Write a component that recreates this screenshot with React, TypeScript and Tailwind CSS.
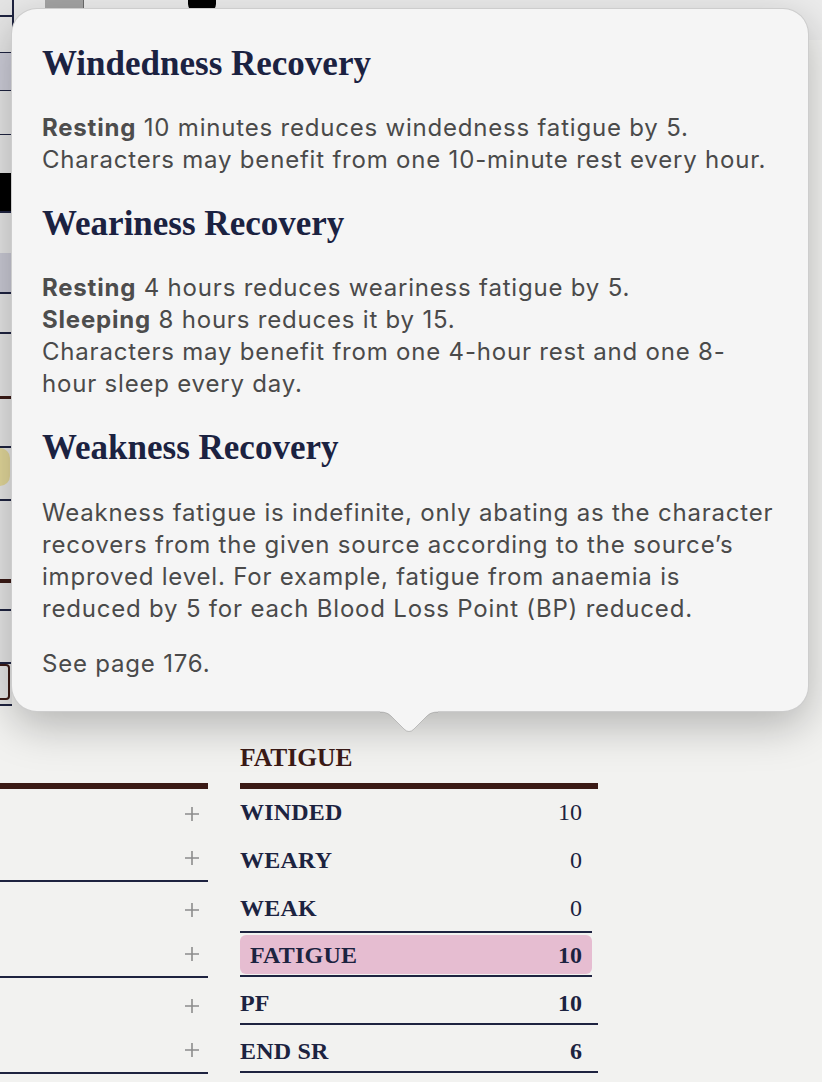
import React from "react";

const Plus = () => (
  <svg width="16" height="16" viewBox="0 0 16 16" className="block">
    <path d="M8 1v14M1 8h14" stroke="#8c8c8c" strokeWidth="1.6" />
  </svg>
);

function LeftStrip() {
  return (
    <div className="w-[12px] self-start flex flex-col bg-[#e5e5e5]">
      <div className="h-[15px]" />
      <div className="h-[2px] bg-[#1e2340]" />
      <div className="h-[35px]" />
      <div className="h-[1px] bg-[#1e2340]" />
      <div className="h-[37px] bg-[#cdcdd8]" />
      <div className="h-[1px] bg-[#1e2340]" />
      <div className="h-[43px]" />
      <div className="h-[1px] bg-[#1e2340]" />
      <div className="h-[38px]" />
      <div className="h-[38px] bg-black" />
      <div className="h-[2px] bg-[#1e2340]" />
      <div className="h-[40px]" />
      <div className="h-[39px] bg-[#c9c9d4]" />
      <div className="h-[2px] bg-[#1e2340]" />
      <div className="h-[38px]" />
      <div className="h-[2px] bg-[#1e2340]" />
      <div className="h-[62px]" />
      <div className="h-[3px] bg-[#3a1a15]" />
      <div className="h-[47px]" />
      <div className="h-[2px] bg-[#1e2340]" />
      <div className="h-[38px] w-[10px] rounded-r-full bg-[#e2d79a]" />
      <div className="h-[13px]" />
      <div className="h-[2px] bg-[#1e2340]" />
      <div className="h-[78px]" />
      <div className="h-[4px] bg-[#3a1a15]" />
      <div className="h-[26px]" />
      <div className="h-[2px] bg-[#1e2340]" />
      <div className="h-[51px]" />
      <div className="h-[2px] bg-[#1e2340]" />
      <div className="h-[36px] w-[10px] rounded-r-[4px] border-2 border-l-0 border-[#3a1a15]" />
      <div className="h-[4px]" />
      <div className="h-[2px] bg-[#1e2340]" />
    </div>
  );
}

function TopArea() {
  return (
    <div className="h-[743px] overflow-hidden flex">
      <LeftStrip />
      <div className="w-[2px] h-[60px] bg-[#1e2340]" />
      <div className="flex-1 flex flex-col">
        <div className="flex h-[40px] items-start">
          <div className="w-[31px] h-[40px] bg-[#e9e9e9]" />
          <div className="w-[38px] h-[40px] bg-[#a4a4a4]" />
          <div className="w-[1px] h-[40px] bg-[#6b6b6b]" />
          <div className="flex-1 h-[40px] bg-[#ececec] relative">
            <div className="ml-[104px] mt-[-12px] w-[28px] h-[24px] rounded-[8px] bg-black" />
          </div>
        </div>
      </div>
    </div>
  );
}

const label = "font-['Liberation_Serif',serif] font-bold text-[24px] text-[#1c2340] tracking-[0.2px]";

function Bottom() {
  return (
    <div className="flex gap-[32px]">
      <div className="w-[208px] flex flex-col">
        <div className="h-[40px]" />
        <div className="h-[6px] bg-[#3a1a15]" />
        <div className="flex flex-col pt-[3px] border-b-2 border-[#1e2340]">
          <div className="h-[44px] flex items-center justify-end pr-[8px]"><Plus /></div>
          <div className="h-[44px] flex items-center justify-end pr-[8px]"><Plus /></div>
        </div>
        <div className="flex flex-col pt-[6px] border-b-2 border-[#1e2340]">
          <div className="h-[44px] flex items-center justify-end pr-[8px]"><Plus /></div>
          <div className="h-[44px] flex items-center justify-end pr-[8px]"><Plus /></div>
        </div>
        <div className="flex flex-col pt-[6px] border-b-2 border-[#1e2340]">
          <div className="h-[44px] flex items-center justify-end pr-[8px]"><Plus /></div>
          <div className="h-[44px] flex items-center justify-end pr-[8px]"><Plus /></div>
        </div>
      </div>
      <div className="w-[358px] flex flex-col">
        <div className="h-[30px] leading-[30px] font-['Liberation_Serif',serif] font-bold text-[25.5px] text-[#3b1a16]">
          FATIGUE
        </div>
        <div className="h-[6px] mt-[10px] bg-[#3a1a15]" />
        <div className="h-[48px] pb-[3px] flex items-center justify-between pr-[16px]">
          <span className={label}>WINDED</span>
          <span className="font-['Liberation_Serif',serif] text-[24px] text-[#1c2340]">10</span>
        </div>
        <div className="h-[48px] pb-[3px] flex items-center justify-between pr-[16px]">
          <span className={label}>WEARY</span>
          <span className="font-['Liberation_Serif',serif] text-[24px] text-[#1c2340]">0</span>
        </div>
        <div className="h-[48px] w-[352px] flex items-center justify-between pr-[10px] border-b-2 border-[#1e2340]">
          <span className={label}>WEAK</span>
          <span className="font-['Liberation_Serif',serif] text-[24px] text-[#1c2340]">0</span>
        </div>
        <div className="h-[44px] w-[352px] border-b-2 border-[#1e2340]">
          <div className="mt-[2px] h-[39px] rounded-[6px] bg-[#e6bdd1] flex items-center justify-between pl-[10px] pr-[10px]">
            <span className={label}>FATIGUE</span>
            <span className="font-['Liberation_Serif',serif] font-bold text-[24px] text-[#1c2340]">10</span>
          </div>
        </div>
        <div className="h-[48px] pt-[5px] flex items-center justify-between pr-[16px] border-b-2 border-[#1e2340]">
          <span className={label}>PF</span>
          <span className="font-['Liberation_Serif',serif] font-bold text-[24px] text-[#1c2340]">10</span>
        </div>
        <div className="h-[48px] pt-[5px] flex items-center justify-between pr-[16px] border-b-2 border-[#1e2340]">
          <span className={label}>END SR</span>
          <span className="font-['Liberation_Serif',serif] font-bold text-[24px] text-[#1c2340]">6</span>
        </div>
      </div>
    </div>
  );
}

const heading = "font-['Liberation_Serif',serif] font-bold text-[35px] leading-[40px] h-[40px] text-[#1b2241] whitespace-nowrap";
const para = "font-['Inter',sans-serif] text-[24px] leading-[32px] tracking-[0.8px] text-[#4a4a4a] whitespace-nowrap";
const b = "font-bold text-[#4d4d4d]";

function Popover() {
  return (
    <>
      <div className="absolute left-[11px] top-[8px] w-[798px] h-[704px] rounded-[26px] bg-[#f5f5f5] border border-[rgba(0,0,0,0.16)] shadow-[0_14px_44px_rgba(0,0,0,0.26)] pl-[30px] pt-[35px] flex flex-col">
        <h2 className={heading}>Windedness Recovery</h2>
        <p className={`${para} mt-[28px]`}>
          <span className={b}>Resting</span> 10 minutes reduces windedness fatigue by 5.
          <br />
          Characters may benefit from one 10-minute rest every hour.
        </p>
        <h2 className={`${heading} mt-[28px]`}>Weariness Recovery</h2>
        <p className={`${para} mt-[28px]`}>
          <span className={b}>Resting</span> 4 hours reduces weariness fatigue by 5.
          <br />
          <span className={b}>Sleeping</span> 8 hours reduces it by 15.
          <br />
          Characters may benefit from one 4-hour rest and one 8-
          <br />
          hour sleep every day.
        </p>
        <h2 className={`${heading} mt-[28px]`}>Weakness Recovery</h2>
        <p className={`${para} mt-[29px]`}>
          Weakness fatigue is indefinite, only abating as the character
          <br />
          recovers from the given source according to the source’s
          <br />
          improved level. For example, fatigue from anaemia is
          <br />
          reduced by 5 for each Blood Loss Point (BP) reduced.
        </p>
        <p className={`${para} mt-[23px]`}>See page 176.</p>
      </div>
      <svg
        className="absolute left-[380px] top-[711px]"
        width="58"
        height="23"
        viewBox="0 0 58 23"
      >
        <path
          d="M0 0 L0 1 C5 1 8 2 11 5 L24 18 Q29 23 34 18 L47 5 C50 2 53 1 58 1 L58 0 Z"
          fill="#f5f5f5"
        />
        <path
          d="M0 1 C5 1 8 2 11 5 L24 18 Q29 23 34 18 L47 5 C50 2 53 1 58 1"
          fill="none"
          stroke="rgba(0,0,0,0.18)"
          strokeWidth="1"
        />
      </svg>
    </>
  );
}

export default function App() {
  return (
    <div className="relative w-[822px] h-[1082px] overflow-hidden bg-[#f2f2f0]">
      <div className="flex flex-col">
        <TopArea />
        <Bottom />
      </div>
      <Popover />
    </div>
  );
}
